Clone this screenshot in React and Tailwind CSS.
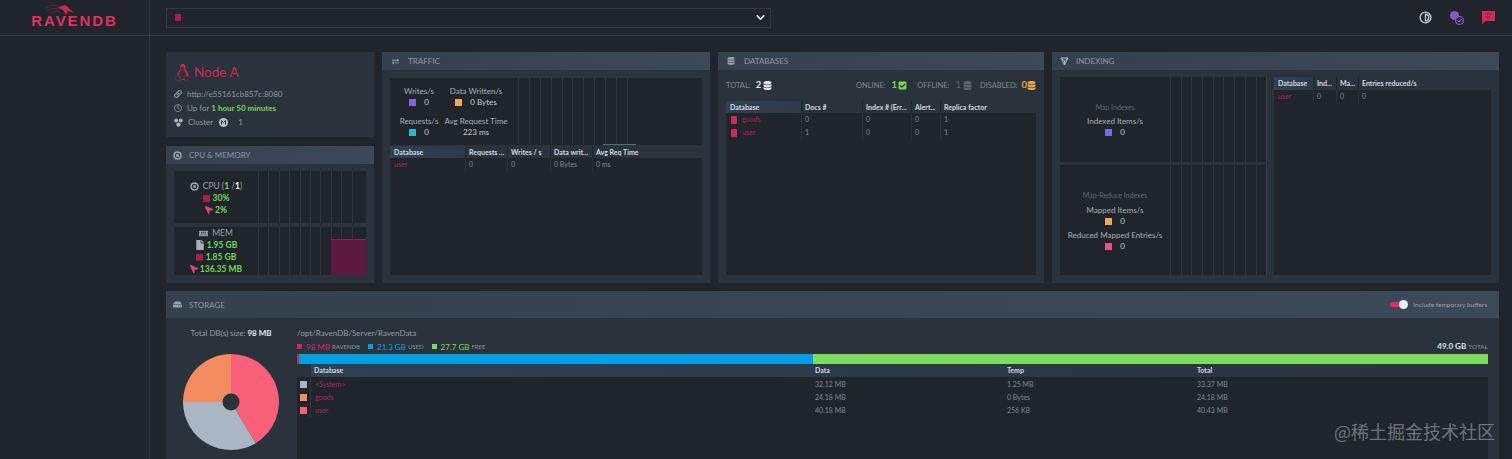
import React from "react";
import { FaLinux, FaDatabase, FaHdd, FaExchangeAlt, FaFile, FaMemory, FaLocationArrow, FaLink, FaRegClock, FaCheckSquare } from "react-icons/fa";
import { Contrast, ChevronDown } from "lucide-react";

const PINK = "#d0275a";

function DbGlyph({ className = "" }) {
  return <span className={`inline-block w-[6px] h-[7px] rounded-[1px] bg-[#a81e50] ${className}`} />;
}

function CpuIcon() {
  return (
    <svg width="9" height="9" viewBox="0 0 9 9" fill="none" stroke="#a3acb6">
      <circle cx="4.5" cy="4.5" r="3.4" strokeWidth="1.2" />
      <circle cx="4.5" cy="4.5" r="4.2" strokeWidth="0.6" strokeDasharray="1 1" />
      <rect x="3.2" y="3.2" width="2.6" height="2.6" fill="#a3acb6" stroke="none" />
    </svg>
  );
}

function Panel({ icon, title, className = "", right, tall, iconClass = "w-[23px]", children }) {
  return (
    <section className={`flex flex-col bg-[#2a323c] ${className}`}>
      <header className={`flex items-center shrink-0 bg-gradient-to-r from-[#36414e] to-[#3c4957] text-[#8d98a5] text-[8px] uppercase ${tall ? "h-[27px]" : "h-[18px]"}`}>
        <span className={`flex justify-center text-[#97a1ad] shrink-0 ${iconClass}`}>{icon}</span>
        <span className="flex-1">{title}</span>
        {right}
      </header>
      {children}
    </section>
  );
}

function ChartLines({ count = 9, step = 21, className = "" }) {
  return (
    <div className={`flex-1 flex items-stretch bg-[#20252b] ${className}`}>
      {Array.from({ length: count }).map((_, i) => (
        <div key={i} className="border-l border-[#30363f] shrink-0" style={{ width: step }} />
      ))}
    </div>
  );
}

function Stat({ label, swatch, value, className = "" }) {
  return (
    <div className={`flex flex-col items-center text-[8px] leading-[11px] text-[#a8b0b9] ${className}`}>
      <div className="whitespace-nowrap">{label}</div>
      <div className="flex items-center gap-[8px] mt-[0px] text-[#c7ccd2]">
        {swatch && <span className="w-[7px] h-[7px]" style={{ background: swatch }} />}
        <span>{value}</span>
      </div>
    </div>
  );
}

function TableHead({ cols }) {
  return (
    <div className="flex h-[12px] items-center text-[7px] font-bold text-[#d5dae0] shrink-0">
      {cols.map((c, i) => (
        <div
          key={c.t}
          className={`h-full flex items-center whitespace-nowrap overflow-hidden ${i === 0 ? "pl-[4px] bg-gradient-to-r from-[#2f4154] to-[#2d3a49]" : "pl-[3px] border-l border-[#20252b]"}`}
          style={{ width: c.w, flex: c.w ? undefined : 1 }}
        >
          {c.t}
        </div>
      ))}
    </div>
  );
}

function Cells({ cols, cells, h = 13 }) {
  return (
    <div className="flex items-center text-[7px] text-[#7f8892]" style={{ height: h }}>
      {cols.map((c, i) => (
        <div
          key={i}
          className={`h-full flex items-center whitespace-nowrap ${i === 0 ? "pl-[4px]" : "pl-[3px] border-l border-[#2a313a]"}`}
          style={{ width: c.w, flex: c.w ? undefined : 1 }}
        >
          {cells[i]}
        </div>
      ))}
    </div>
  );
}

function Pie() {
  const p = (deg, r = 48) => {
    const a = ((deg - 90) * Math.PI) / 180;
    return `${50 + r * Math.cos(a)} ${50 + r * Math.sin(a)}`;
  };
  return (
    <svg width="100" height="100" viewBox="0 0 100 100">
      <path d={`M50 50L${p(0)}A48 48 0 0 1 ${p(149)}Z`} fill="#f85f78" />
      <path d={`M50 50L${p(149)}A48 48 0 0 1 ${p(270)}Z`} fill="#aab6c3" />
      <path d={`M50 50L${p(270)}A48 48 0 0 1 ${p(360)}Z`} fill="#f48c62" />
      <circle cx="50" cy="50" r="8.5" fill="#2a323c" />
    </svg>
  );
}

const trafficCols = [{ t: "Database", w: 75 }, { t: "Requests ...", w: 42 }, { t: "Writes / s", w: 43 }, { t: "Data writ...", w: 42 }, { t: "Avg Req Time" }];
const dbCols = [{ t: "Database", w: 75 }, { t: "Docs #", w: 61 }, { t: "Index # (Err...", w: 49 }, { t: "Alert...", w: 29 }, { t: "Replica factor" }];
const idxCols = [{ t: "Database", w: 39 }, { t: "Ind...", w: 23 }, { t: "Ma...", w: 22 }, { t: "Entries reduced/s" }];

export default function App() {
  return (
    <div className="relative h-[459px] w-[1512px] overflow-hidden bg-[#20252b] text-[#a8b0b9] font-['Lato','Liberation_Sans',sans-serif]">
      {/* top bar */}
      <div className="flex h-[36px] border-b border-[#343a42]">
        <div className="w-[150px] shrink-0 border-r border-[#343a42] flex flex-col items-center pt-[4px]">
          <svg width="30" height="11" viewBox="0 0 30 11" className="ml-[-30px]">
            <path d="M0 4C5 1 9 1 13 2M2 7C6 4 10 4 14 5M5 10C8 7 11 7 15 8" stroke="#6f2a45" strokeWidth="0.8" fill="none" />
            <path d="M13 3L20 1l3 2 6 6-6-2-2 4-3-5-3-1Z" fill="#c42855" />
          </svg>
          <span className="text-[15px] leading-[11px] font-bold text-[#e0305f] font-['Liberation_Sans',sans-serif] tracking-[1.9px]">RAVENDB</span>
        </div>
        <div className="flex-1 flex items-center pl-[16px] pr-[15px]">
          <div className="w-[605px] h-[20px] border border-[#343a42] flex items-center justify-between pl-[8px] pr-[3px]">
            <DbGlyph />
            <ChevronDown size={13} strokeWidth={3} className="text-[#e4e7ea]" />
          </div>
          <div className="ml-auto flex items-center">
            <Contrast size={13} strokeWidth={2.5} className="text-[#c5ccd4]" />
            <svg width="16" height="16" viewBox="0 0 16 16" className="ml-[17px]">
              <circle cx="5.5" cy="5.5" r="4.5" fill="#8c55c4" />
              <circle cx="10.5" cy="10.5" r="4" fill="#2b2a45" stroke="#8c55c4" strokeWidth="1.2" />
              <path d="M8.5 10.5l1.5 1.5 2.5-3" stroke="#a084cc" fill="none" strokeWidth="1" />
            </svg>
            <svg width="13" height="13" viewBox="0 0 13 13" className="ml-[17px] mr-[2px]">
              <path d="M0 0h13v10H4L0 13Z" fill="#d62a5e" />
              <path d="M3 3h7M3 6h5" stroke="#7c1f40" strokeWidth="1" />
            </svg>
          </div>
        </div>
      </div>

      <div className="flex h-[423px]">
        <aside className="w-[150px] shrink-0 border-r border-[#343a42]" />
        <main className="flex-1 min-w-0 pt-[16px] pl-[16px] pr-[13px] flex flex-col gap-[8px]">
          <div className="flex gap-[8px] h-[231px] shrink-0">
            {/* left column */}
            <div className="w-[208px] shrink-0 flex flex-col gap-[9px]">
              <div className="h-[85px] bg-[#2a323c] pl-[8px] pt-[11px]">
                <div className="flex items-center gap-[3px] text-[13.5px] leading-[18px]" style={{ color: PINK }}>
                  <FaLinux size={17} />
                  <span>Node A</span>
                </div>
                <div className="mt-[8px] flex flex-col gap-[4px] text-[8px] leading-[10px] text-[#8f98a2]">
                  <div className="flex items-center gap-[5px]"><FaLink size={8} /><span>http://e55161cb857c:8080</span></div>
                  <div className="flex items-center gap-[5px]"><FaRegClock size={8} /><span>Up for <b className="text-[#73d85a] font-bold">1 hour 50 minutes</b></span></div>
                  <div className="flex items-center gap-[5px]">
                    <svg width="9" height="9" viewBox="0 0 9 9" fill="#a8b0b9"><circle cx="2.2" cy="2.4" r="2" /><circle cx="6.8" cy="2.4" r="2" /><circle cx="4.5" cy="6.6" r="2.2" /></svg>
                    <span>Cluster</span>
                    <svg width="9" height="9" viewBox="0 0 9 9" className="ml-[1px]"><circle cx="4.5" cy="4.5" r="4.5" fill="#b8c0c8" /><path d="M2.5 6.5v-4l2 2 2-2v4" stroke="#2a323c" fill="none" strokeWidth="1" /></svg>
                    <span className="ml-[5px]">1</span>
                  </div>
                </div>
              </div>
              <Panel icon={<CpuIcon />} title="CPU & Memory" className="flex-1">
                <div className="flex-1 flex flex-col gap-[4px] px-[8px] pt-[7px] pb-[8px]">
                  <div className="flex h-[52px] bg-[#20252b]">
                    <div className="w-[84px] shrink-0 flex flex-col items-center pt-[9px] text-[8.5px] leading-[12px]">
                      <div className="flex items-center gap-[4px] text-[#98a1ab]"><CpuIcon /><span>CPU (<b className="text-[#73d85a]">1</b> /<b className="text-white">1</b>)</span></div>
                      <div className="flex items-center gap-[3px] text-[#73d85a] font-bold"><DbGlyph className="w-[7px]" />30%</div>
                      <div className="flex items-center gap-[2px] text-[#73d85a] font-bold"><FaLocationArrow size={8} className="text-[#e0476f] -rotate-90" />2%</div>
                    </div>
                    <ChartLines count={10} step={10.4} />
                  </div>
                  <div className="flex h-[48px] bg-[#20252b]">
                    <div className="w-[84px] shrink-0 flex flex-col items-center text-[8.5px] leading-[12px]">
                      <div className="flex items-center gap-[4px] text-[#98a1ab]"><FaMemory size={9} /><span>MEM</span></div>
                      <div className="flex items-center gap-[2px] text-[#73d85a] font-bold"><FaFile size={10} className="text-[#a8b0b9]" />1.95 GB</div>
                      <div className="flex items-center gap-[3px] text-[#73d85a] font-bold"><DbGlyph className="w-[7px]" />1.85 GB</div>
                      <div className="flex items-center gap-[2px] text-[#73d85a] font-bold"><FaLocationArrow size={8} className="text-[#e0476f] -rotate-90" />136.35 MB</div>
                    </div>
                    <div className="flex-1 flex flex-col relative">
                      <ChartLines count={10} step={10.4} />
                      <div className="absolute right-0 bottom-0 w-[35px] h-[36px] bg-[#5e1a3e] border-t border-[#8e2350]" />
                    </div>
                  </div>
                </div>
              </Panel>
            </div>

            {/* traffic */}
            <Panel icon={<FaExchangeAlt size={7} />} title="Traffic" iconClass="w-[26px]" className="w-[328px] shrink-0">
              <div className="flex-1 flex flex-col px-[8px] pt-[8px] pb-[8px]">
                <div className="flex h-[67px] bg-[#20252b] shrink-0">
                  <div className="w-[128px] shrink-0 grid grid-cols-[58px_56px] pt-[8px] content-start gap-y-[8px]">
                    <Stat label="Writes/s" swatch="#8465d6" value="0" />
                    <Stat label="Data Written/s" swatch="#f0a45c" value="0 Bytes" />
                    <Stat label="Requests/s" swatch="#2fb4d0" value="0" />
                    <Stat label="Avg Request Time" value="223 ms" />
                  </div>
                  <div className="flex-1 flex flex-col">
                    <ChartLines count={11} step={10.9} />
                    <div className="h-[1px] bg-[#20252b] flex">
                      <div className="ml-[85px] w-[33px] bg-[#3f7d6c]" />
                    </div>
                  </div>
                </div>
                <div className="mt-[1px]"><TableHead cols={trafficCols} /></div>
                <div className="flex-1 bg-[#20252b]">
                  <Cells cols={trafficCols} cells={[<span className="text-[#b0225a]">user</span>, "0", "0", "0 Bytes", "0 ms"]} />
                </div>
              </div>
            </Panel>

            {/* databases */}
            <Panel icon={<FaDatabase size={8} />} title="Databases" iconClass="w-[26px]" className="w-[326px] shrink-0">
              <div className="flex-1 flex flex-col px-[8px] pb-[8px]">
                <div className="flex items-center h-[31px] text-[7.5px] text-[#7f8892] shrink-0">
                  <span>TOTAL:</span>
                  <b className="ml-[5px] text-[#e6e9ec] text-[9.5px]">2</b>
                  <FaDatabase size={9} className="ml-[2px] text-[#dfe3e7]" />
                  <span className="ml-auto">ONLINE:</span>
                  <b className="ml-[6px] text-[#73d85a] text-[9.5px]">1</b>
                  <FaCheckSquare size={9} className="ml-[1px] text-[#73d85a]" />
                  <span className="ml-[10px]">OFFLINE:</span>
                  <span className="ml-[6px] text-[#5d6670] text-[9.5px]">1</span>
                  <FaDatabase size={9} className="ml-[2px] text-[#5d6670]" />
                  <span className="ml-[8px]">DISABLED:</span>
                  <b className="ml-[4px] text-[#e9a24f] text-[9.5px]">0</b>
                  <FaDatabase size={9} className="text-[#e9a24f]" />
                </div>
                <TableHead cols={dbCols} />
                <div className="flex-1 bg-[#20252b]">
                  <Cells cols={dbCols} cells={[<span className="flex items-center gap-[5px] pl-[1px] text-[#b0225a]"><DbGlyph className="bg-[#d0275a] h-[8px]" />goods</span>, "0", "0", "0", "1"]} />
                  <Cells cols={dbCols} cells={[<span className="flex items-center gap-[5px] pl-[1px] text-[#b0225a]"><DbGlyph className="bg-[#d0275a] h-[8px]" />user</span>, "1", "0", "0", "1"]} />
                </div>
              </div>
            </Panel>

            {/* indexing */}
            <Panel
              icon={
                <svg width="9" height="9" viewBox="0 0 9 9" fill="none" stroke="#b3bcc6" strokeWidth="1"><path d="M1 1h7L4.5 8Z" /><path d="M1 1l3.5 3L8 1M4.5 4v4" /></svg>
              }
              title="Indexing"
              iconClass="w-[24px]"
              className="flex-1 min-w-0"
            >
              <div className="flex-1 flex gap-[8px] px-[8px] pt-[7px] pb-[8px]">
                <div className="w-[206px] shrink-0 flex flex-col gap-[3px]">
                  <div className="flex h-[85px] bg-[#20252b]">
                    <div className="w-[110px] shrink-0 flex flex-col items-center pt-[25px]">
                      <div className="text-[7px] leading-[10px] text-[#5f6873] mb-[4px]">Map Indexes</div>
                      <Stat label="Indexed Items/s" swatch="#7b66e8" value="0" />
                    </div>
                    <ChartLines count={9} step={10.7} className="border-r border-[#3a414a]" />
                  </div>
                  <div className="flex flex-1 bg-[#20252b]">
                    <div className="w-[110px] shrink-0 flex flex-col items-center pt-[25px]">
                      <div className="text-[7px] leading-[10px] text-[#5f6873] mb-[5px]">Map-Reduce Indexes</div>
                      <Stat label="Mapped Items/s" swatch="#f0a45c" value="0" />
                      <Stat label="Reduced Mapped Entries/s" swatch="#ec4f8c" value="0" className="mt-[3px]" />
                    </div>
                    <ChartLines count={9} step={10.7} className="border-r border-[#3a414a]" />
                  </div>
                </div>
                <div className="flex-1 flex flex-col">
                  <div className="[&>div]:h-[13px]"><TableHead cols={idxCols} /></div>
                  <div className="flex-1 bg-[#20252b]">
                    <Cells cols={idxCols} cells={[<span className="text-[#b0225a]">user</span>, "0", "0", "0"]} />
                  </div>
                </div>
              </div>
            </Panel>
          </div>

          {/* storage */}
          <Panel
            tall
            icon={<FaHdd size={9} />}
            title="Storage"
            className="flex-1 min-h-0"
            right={
              <div className="flex items-center normal-case pr-[12px]">
                <span className="relative w-[14px] h-[5px] rounded-full bg-[#dd2e62] mr-[9px]">
                  <span className="absolute -right-[4px] -top-[2px] w-[9px] h-[9px] rounded-full bg-[#eef0f3]" />
                </span>
                <span className="text-[6.5px] text-[#98a1ab]">Include temporary buffers</span>
              </div>
            }
          >
            <div className="flex-1 flex min-h-0">
              <div className="w-[131px] shrink-0 flex flex-col items-center pt-[10px] pr-[1px]">
                <div className="text-[8px] leading-[11px] text-[#949da7] whitespace-nowrap">Total DB(s) size: <b className="text-[#e6e9ec]">98 MB</b></div>
                <div className="mt-[13px]"><Pie /></div>
              </div>
              <div className="flex-1 flex flex-col pr-[11px] min-w-0">
                <div className="pt-[10px] text-[8px] leading-[11px] text-[#949da7]">/opt/RavenDB/Server/RavenData</div>
                <div className="flex items-center justify-between h-[15px] text-[8px] leading-[10px]">
                  <div className="flex items-center">
                    <span className="w-[5px] h-[5px] bg-[#d0275a] mr-[4px]" />
                    <span className="text-[#d0275a]">98 MB</span><span className="text-[6px] text-[#8b949e] ml-[2px]">RAVENDB</span>
                    <span className="w-[5px] h-[5px] bg-[#089fe0] ml-[8px] mr-[4px]" />
                    <span className="text-[#089fe0]">21.3 GB</span><span className="text-[6px] text-[#8b949e] ml-[2px]">USED</span>
                    <span className="w-[5px] h-[5px] bg-[#7fd95f] ml-[8px] mr-[4px]" />
                    <span className="text-[#7fd95f]">27.7 GB</span><span className="text-[6px] text-[#8b949e] ml-[2px]">FREE</span>
                  </div>
                  <div><b className="text-[#dfe3e7]">49.0 GB</b> <span className="text-[6.5px] text-[#8b949e]">TOTAL</span></div>
                </div>
                <div className="flex h-[10px] shrink-0">
                  <div className="w-[2px] bg-[#c5285d]" />
                  <div className="w-[514px] bg-[#049fe2]" />
                  <div className="flex-1 bg-[#80d960]" />
                </div>
                <div className="flex h-[13px] items-center text-[7px] font-bold text-[#d5dae0] shrink-0 bg-gradient-to-r from-[#2f4154] to-[#2a323c]">
                  <div className="w-[14px] shrink-0 h-full bg-[#2a323c]" />
                  <div className="w-[504px] shrink-0 pl-[3px]">Database</div>
                  <div className="w-[192px] shrink-0">Data</div>
                  <div className="w-[190px] shrink-0">Temp</div>
                  <div>Total</div>
                </div>
                <div className="flex-1 bg-[#20252b] text-[7px] text-[#7f8892] pt-[1px]">
                  {[
                    ["#aab6c3", "<System>", "32.12 MB", "1.25 MB", "33.37 MB"],
                    ["#f48c62", "goods", "24.18 MB", "0 Bytes", "24.18 MB"],
                    ["#f85f78", "user", "40.18 MB", "256 KB", "40.43 MB"],
                  ].map(([color, name, data, temp, total]) => (
                    <div key={name} className="flex items-center h-[13px]">
                      <div className="w-[14px] shrink-0 flex justify-center border-r border-[#343a42] h-full items-center">
                        <span className="w-[7px] h-[7px]" style={{ background: color }} />
                      </div>
                      <div className="w-[504px] shrink-0 pl-[4px] text-[#b0225a]">{name}</div>
                      <div className="w-[192px] shrink-0">{data}</div>
                      <div className="w-[190px] shrink-0">{temp}</div>
                      <div>{total}</div>
                    </div>
                  ))}
                </div>
              </div>
            </div>
          </Panel>
        </main>
      </div>

      {/* watermark */}
      <div className="absolute left-[1334px] top-[420px] text-[18px] leading-[22px] text-[#8a8f95] whitespace-nowrap opacity-75 font-['Noto_Sans_CJK_SC',sans-serif]">@稀土掘金技术社区</div>
    </div>
  );
}
